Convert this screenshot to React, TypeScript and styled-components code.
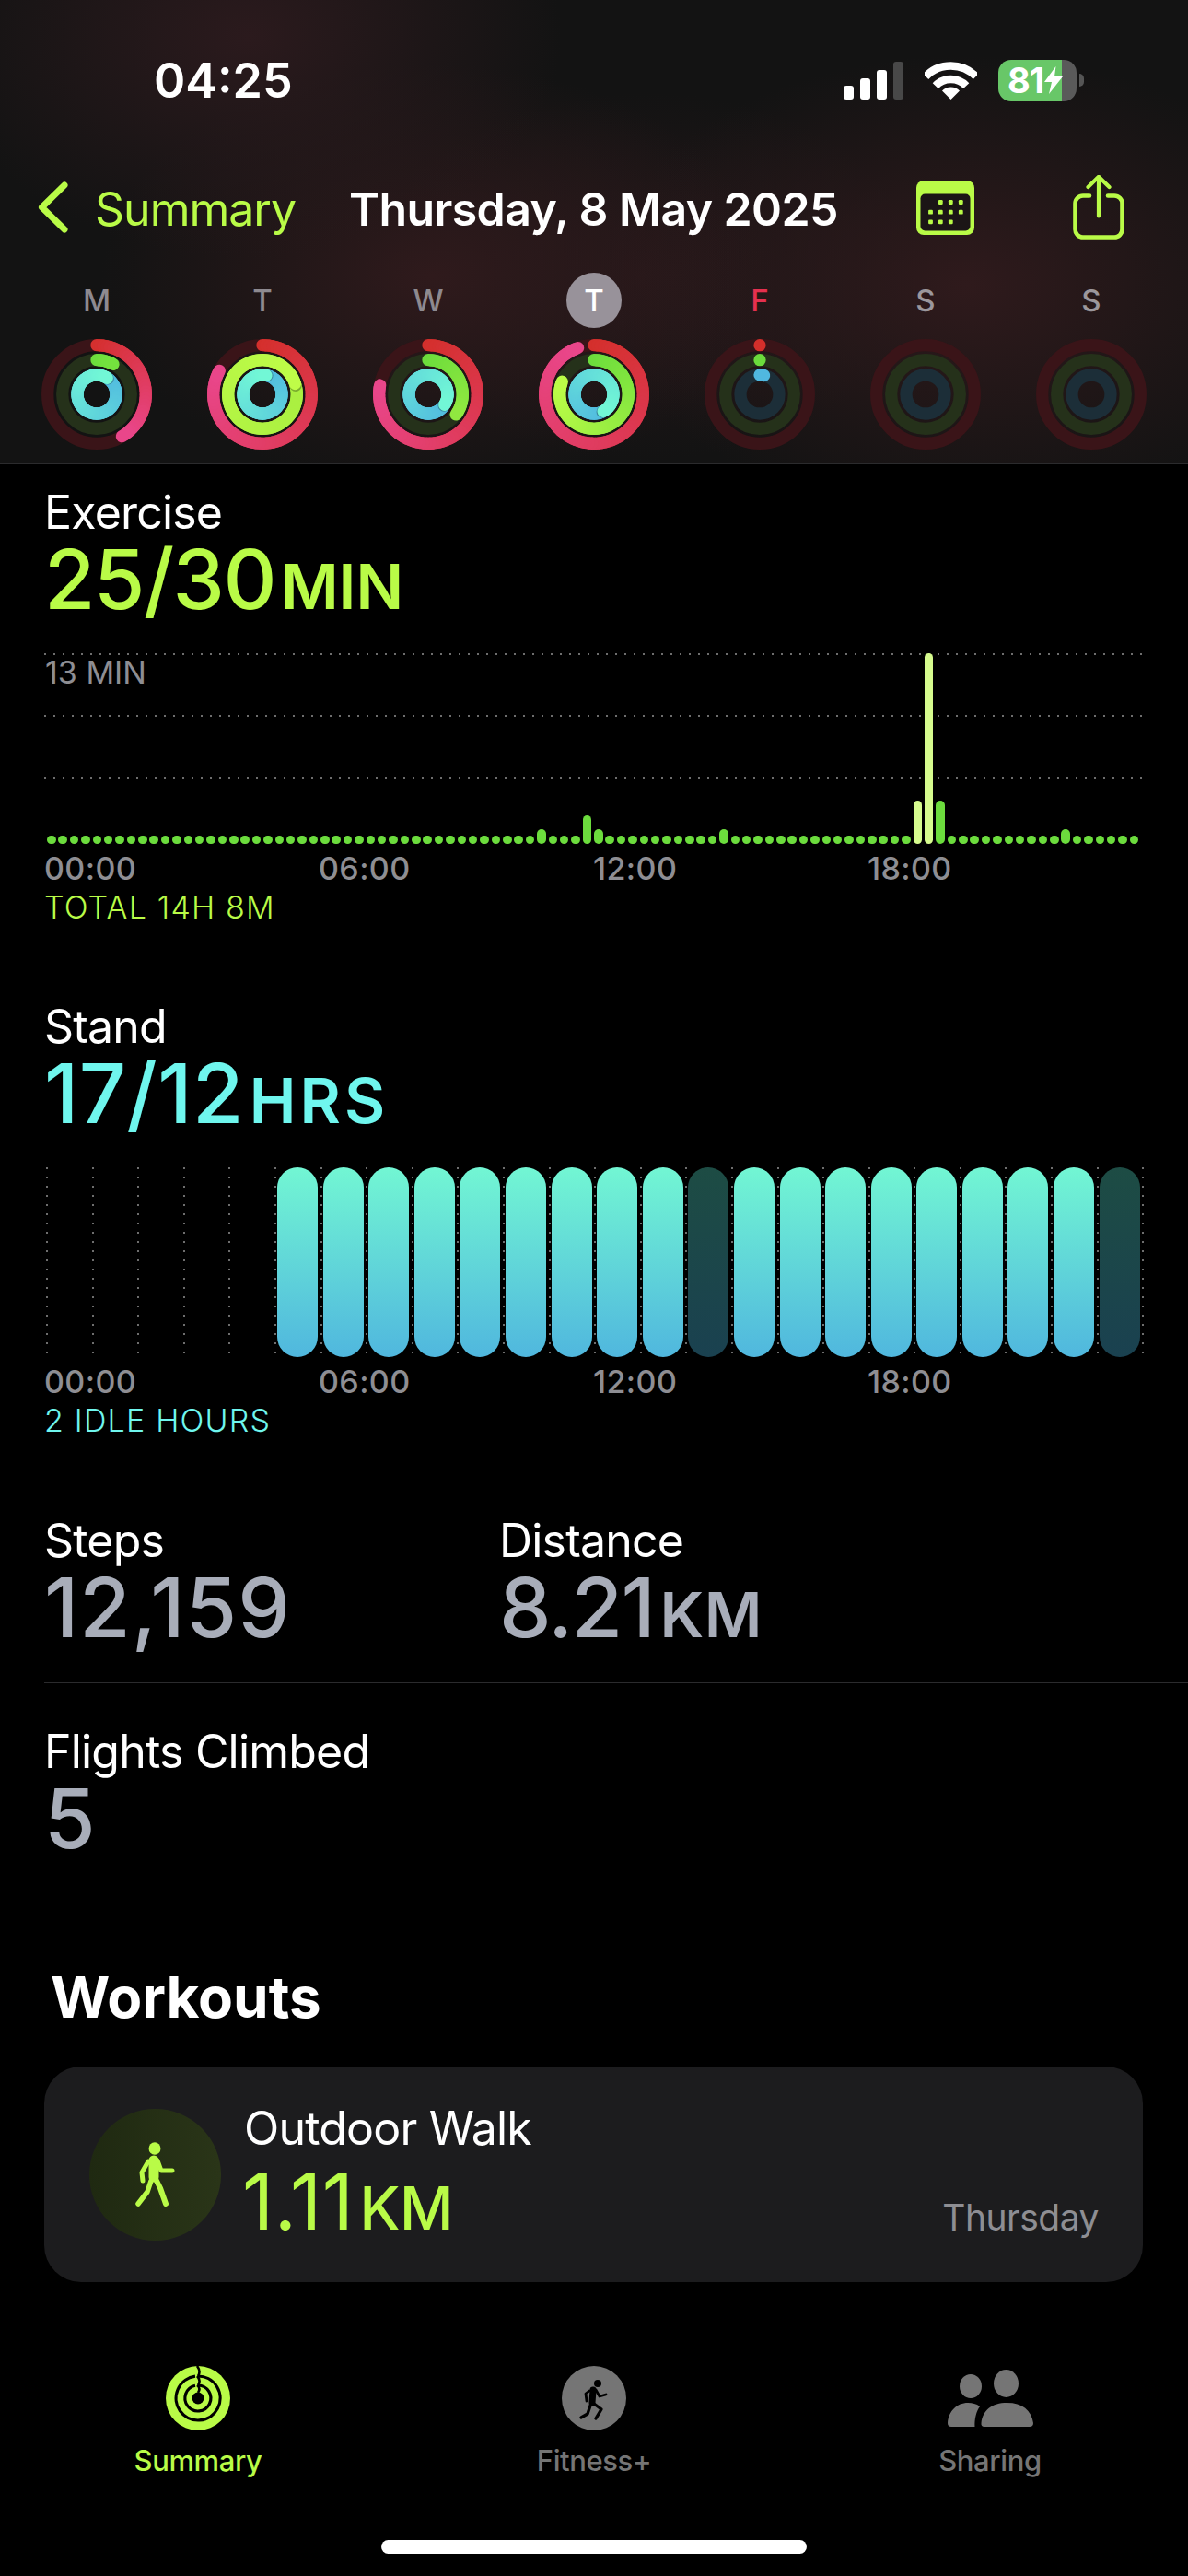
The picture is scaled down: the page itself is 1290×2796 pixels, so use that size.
import React, { FunctionComponent } from 'react';
import styled, { createGlobalStyle } from 'styled-components';

const colors = {
  accent: '#b9fb47',
  cyan: '#6ff6ee',
  grey: '#8e8e93',
  stat: '#a8adb9',
  tab: '#757575',
};

const GlobalStyle = createGlobalStyle`
  html, body {
    margin: 0;
    padding: 0;
    background: #000;
    font-family: Inter, "Noto Sans", "Liberation Sans", sans-serif;
  }
`;

type Arc = { frac: number; from?: string; to?: string };
type Day = { label: string; tone: 'past' | 'today' | 'now' | 'future'; red: Arc; green: Arc; blue: Arc };

const RED = ['#d42f2b', '#e9468a'];
const GREEN = ['#6bdc3c', '#bcfc47'];
const BLUE = ['#50b8e0', '#72f7d6'];

const days: Day[] = [
  {
    label: 'M',
    tone: 'past',
    red: { frac: 0.414 },
    green: { frac: 0.08, from: '#6bdc3c', to: '#74e23e' },
    blue: { frac: 1.09 },
  },
  {
    label: 'T',
    tone: 'past',
    red: { frac: 0.83 },
    green: { frac: 1.2, from: '#a8ee40', to: '#bffc48' },
    blue: { frac: 1.03 },
  },
  {
    label: 'W',
    tone: 'past',
    red: { frac: 0.78 },
    green: { frac: 0.35, from: '#6bdc3c', to: '#90e840' },
    blue: { frac: 1.34 },
  },
  {
    label: 'T',
    tone: 'today',
    red: { frac: 0.947 },
    green: { frac: 0.81 },
    blue: { frac: 1.42 },
  },
  {
    label: 'F',
    tone: 'now',
    red: { frac: 0 },
    green: { frac: 0 },
    blue: { frac: 0.035, from: '#50b8e0', to: '#50b8e0' },
  },
  { label: 'S', tone: 'future', red: { frac: -1 }, green: { frac: -1 }, blue: { frac: -1 } },
  { label: 'S', tone: 'future', red: { frac: -1 }, green: { frac: -1 }, blue: { frac: -1 } },
];

const mix = (a: string, b: string, t: number) => {
  const ch = (hex: string, i: number) => parseInt(hex.slice(1 + i * 2, 3 + i * 2), 16);
  const out = [0, 1, 2].map((i) => Math.round(ch(a, i) + (ch(b, i) - ch(a, i)) * t));
  return `rgb(${out.join(',')})`;
};

const point = (r: number, deg: number) => {
  const rad = (deg * Math.PI) / 180;
  return [60 + r * Math.sin(rad), 60 - r * Math.cos(rad)];
};

const RingArc: FunctionComponent<{ r: number; arc: Arc; base: string[]; track: string }> = ({
  r,
  arc,
  base,
  track,
}) => {
  const w = 13.3;
  const from = arc.from || base[0];
  const to = arc.to || base[1];
  const end = arc.frac * 360;
  const start = arc.frac > 1 ? end - 360 : 0;
  const steps = Math.max(2, Math.ceil((end - start) / 4));
  const parts = [];
  if (arc.frac === 0) {
    const [x, y] = point(r, 0);
    parts.push(<circle key="dot" cx={x} cy={y} r={w / 2} fill={from} />);
  } else if (arc.frac > 0) {
    for (let i = 0; i < steps; i++) {
      const a = start + ((end - start) * i) / steps;
      const b = start + ((end - start) * (i + 1)) / steps;
      const [x1, y1] = point(r, a);
      const [x2, y2] = point(r, b);
      if (arc.frac > 1 && i === steps - 2) {
        const [sx, sy] = point(r, end + 3);
        parts.push(<circle key="shade" cx={sx} cy={sy} r={w / 2} fill="#000" opacity={0.28} />);
      }
      parts.push(
        <path
          key={i}
          d={`M${x1} ${y1} L${x2} ${y2}`}
          stroke={mix(from, to, (i + 1) / steps)}
          strokeWidth={w}
          strokeLinecap="round"
          fill="none"
        />
      );
    }
  }
  return (
    <g>
      <circle cx={60} cy={60} r={r} stroke={track} strokeWidth={w} fill="none" />
      {parts}
    </g>
  );
};

const Rings: FunctionComponent<{ day: Day }> = ({ day }) => (
  <svg width={120} height={120} viewBox="0 0 120 120">
    <RingArc r={53.3} arc={day.red} base={RED} track="#3a1418" />
    <RingArc r={37.3} arc={day.green} base={GREEN} track="#25311a" />
    <RingArc r={21} arc={day.blue} base={BLUE} track="#1c2e38" />
  </svg>
);

const tallBars: Record<number, { h: number; light?: boolean }> = {
  43: { h: 16 },
  47: { h: 31 },
  48: { h: 16 },
  59: { h: 16 },
  76: { h: 47, light: true },
  77: { h: 207, light: true },
  78: { h: 47 },
  89: { h: 16 },
};
const quarterHours = Array.from({ length: 96 }, (_, i) => tallBars[i] || { h: 9.5 });

const idleHours = [14, 23];
const hours = Array.from({ length: 24 }, (_, i) => i);
const axisLabels = ['00:00', '06:00', '12:00', '18:00'];

const App: FunctionComponent = () => (
  <Page>
    <GlobalStyle />
    <Header>
      <StatusBar>
        <Time>04:25</Time>
        <StatusIcons>
          <Signal>
            <SignalBar $h={15} />
            <SignalBar $h={23} />
            <SignalBar $h={32} />
            <SignalBar $h={41} $off />
          </Signal>
          <svg width={57} height={42} viewBox="0 0 57 42">
            <path d="M1.2 17 A38 38 0 0 1 55.8 17" stroke="#fff" strokeWidth={8.5} fill="none" />
            <path d="M11.8 27.2 A23 23 0 0 1 45.2 27.2" stroke="#fff" strokeWidth={8.5} fill="none" />
            <path d="M28.5 42 L19 32.5 A13.5 13.5 0 0 1 38 32.5 Z" fill="#fff" />
          </svg>
          <BatteryWrap>
            <Battery>
              81
              <svg width={20} height={30} viewBox="0 0 20 30">
                <path d="M12.5 0 L0 17 H8 L5 30 L20 11 H11 Z" fill="#fff" />
              </svg>
            </Battery>
            <BatteryCap />
          </BatteryWrap>
        </StatusIcons>
      </StatusBar>

      <NavRow>
        <Back>
          <svg width={33} height={56} viewBox="0 0 33 56">
            <path
              d="M29 4 L4.5 28 L29 52"
              stroke={colors.accent}
              strokeWidth={7}
              strokeLinecap="round"
              strokeLinejoin="round"
              fill="none"
            />
          </svg>
          <BackLabel>Summary</BackLabel>
        </Back>
        <Title>Thursday, 8 May 2025</Title>
        <svg width={63} height={59} viewBox="0 0 63 59">
          <rect width={63} height={59} rx={8} fill={colors.accent} />
          <rect x={4.5} y={14.5} width={54} height={40} rx={5} fill="#1b1516" />
          {[
            [26.3, 23.5],
            [37.3, 23.5],
            [48.3, 23.5],
            [15.5, 34.2],
            [26.3, 34.2],
            [37.3, 34.2],
            [48.3, 34.2],
            [15.5, 44.8],
            [26.3, 44.8],
            [37.3, 44.8],
          ].map(([x, y]) => (
            <rect key={`${x}-${y}`} x={x - 2.4} y={y - 2.4} width={4.8} height={4.8} rx={1.2} fill={colors.accent} />
          ))}
        </svg>
        <svg width={56} height={70} viewBox="0 0 56 70">
          <path
            d="M18 22.5 H11 a8.5 8.5 0 0 0 -8.5 8.5 V59 a8.5 8.5 0 0 0 8.5 8.5 H45 a8.5 8.5 0 0 0 8.5 -8.5 V31 a8.5 8.5 0 0 0 -8.5 -8.5 H38"
            stroke={colors.accent}
            strokeWidth={4.6}
            strokeLinecap="round"
            fill="none"
          />
          <path
            d="M28 44.5 V2 M16.5 13 L28 1.8 L39.5 13"
            stroke={colors.accent}
            strokeWidth={4.2}
            strokeLinecap="round"
            strokeLinejoin="round"
            fill="none"
          />
        </svg>
      </NavRow>

      <DayRow>
        {days.map((day, i) => (
          <DayCell key={i}>
            <DayLabel $tone={day.tone}>{day.label}</DayLabel>
            <Rings day={day} />
          </DayCell>
        ))}
      </DayRow>
    </Header>

    <Section>
      <MetricLabel>Exercise</MetricLabel>
      <MetricValue $color={colors.accent} $spacing={-1.6}>
        25/30<Unit $spacing={0}>MIN</Unit>
      </MetricValue>
      <ExerciseChart>
        <GridLine $top={0} />
        <GridLine $top={67} />
        <GridLine $top={134} />
        <ScaleLabel>13 MIN</ScaleLabel>
        {quarterHours.map((bar, i) => (
          <MoveBar key={i} $h={bar.h} $light={bar.light} />
        ))}
      </ExerciseChart>
      <Axis>
        {axisLabels.map((t) => (
          <AxisLabel key={t}>{t}</AxisLabel>
        ))}
      </Axis>
      <ChartNote $color={colors.accent}>TOTAL 14H 8M</ChartNote>
    </Section>

    <Section>
      <MetricLabel>Stand</MetricLabel>
      <MetricValue $color={colors.cyan} $spacing={0.4}>
        17/12<Unit $spacing={4}>HRS</Unit>
      </MetricValue>
      <StandChart>
        {hours.map((h) => (
          <HourSlot key={h}>{h >= 5 && <HourBar $idle={idleHours.includes(h)} />}</HourSlot>
        ))}
      </StandChart>
      <Axis>
        {axisLabels.map((t) => (
          <AxisLabel key={t}>{t}</AxisLabel>
        ))}
      </Axis>
      <ChartNote $color={colors.cyan}>2 IDLE HOURS</ChartNote>
    </Section>

    <StatsRow>
      <div>
        <MetricLabel>Steps</MetricLabel>
        <MetricValue $color={colors.stat} $spacing={1}>
          12,159
        </MetricValue>
      </div>
      <div>
        <MetricLabel>Distance</MetricLabel>
        <MetricValue $color={colors.stat} $spacing={-1.6}>
          8.21<Unit $spacing={0.5}>KM</Unit>
        </MetricValue>
      </div>
    </StatsRow>

    <FlightsBlock>
      <MetricLabel>Flights Climbed</MetricLabel>
      <MetricValue $color={colors.stat} $spacing={0}>
        5
      </MetricValue>
    </FlightsBlock>

    <WorkoutsTitle>Workouts</WorkoutsTitle>

    <WorkoutCard>
      <WorkoutIcon>
        <svg width={44} height={70} viewBox="0 0 44 70">
          <ellipse cx={21} cy={7} rx={6.5} ry={6.8} fill={colors.accent} />
          <path d="M20 20 V38" stroke={colors.accent} strokeWidth={11} strokeLinecap="round" />
          <path d="M24 20 L28 31 H40" stroke={colors.accent} strokeWidth={5} strokeLinecap="round" strokeLinejoin="round" fill="none" />
          <path d="M14 21 L7 33 L8 42" stroke={colors.accent} strokeWidth={5} strokeLinecap="round" strokeLinejoin="round" fill="none" />
          <path d="M21 38 L27 50 L33 67" stroke={colors.accent} strokeWidth={6} strokeLinecap="round" strokeLinejoin="round" fill="none" />
          <path d="M17 42 L13 54 L3 67" stroke={colors.accent} strokeWidth={5.5} strokeLinecap="round" strokeLinejoin="round" fill="none" />
        </svg>
      </WorkoutIcon>
      <WorkoutText>
        <MetricLabel>Outdoor Walk</MetricLabel>
        <WorkoutValue>
          1.11<WorkoutUnit>KM</WorkoutUnit>
        </WorkoutValue>
      </WorkoutText>
      <WorkoutDay>Thursday</WorkoutDay>
    </WorkoutCard>

    <TabBar>
      <Tab $active>
        <TabIcon>
          <svg width={70} height={70} viewBox="0 0 70 70">
            <circle cx={35} cy={35} r={35} fill={colors.accent} />
            <path d="M35 11 A24 24 0 1 1 32 11.2" stroke="#000" strokeWidth={3.2} fill="none" />
            <path d="M35 21 A14 14 0 1 1 32 21.3" stroke="#000" strokeWidth={3.2} fill="none" />
            <path d="M34 0 C37 4 37 8 35 11 M34 11 C37 14 37 18 35 21 M34 21 C37 23 37 26 35 29" stroke="#000" strokeWidth={2.6} fill="none" />
            <circle cx={35} cy={35} r={6.5} fill="#000" />
          </svg>
        </TabIcon>
        <TabLabel>Summary</TabLabel>
      </Tab>
      <Tab>
        <TabIcon>
          <svg width={70} height={70} viewBox="0 0 70 70">
            <circle cx={35} cy={35} r={35} fill={colors.tab} />
            <circle cx={39} cy={19} r={4} fill="#000" />
            <path d="M34 26 L33 40" stroke="#000" strokeWidth={7} strokeLinecap="round" />
            <path d="M37 26 L41 33 L48 31" stroke="#000" strokeWidth={2.8} strokeLinecap="round" strokeLinejoin="round" fill="none" />
            <path d="M30 27 L26 30 L27 38" stroke="#000" strokeWidth={2.8} strokeLinecap="round" strokeLinejoin="round" fill="none" />
            <path d="M35 41 L43 47 L37 57" stroke="#000" strokeWidth={3.4} strokeLinecap="round" strokeLinejoin="round" fill="none" />
            <path d="M31 43 L28 52 L21 56" stroke="#000" strokeWidth={3.4} strokeLinecap="round" strokeLinejoin="round" fill="none" />
          </svg>
        </TabIcon>
        <TabLabel>Fitness+</TabLabel>
      </Tab>
      <Tab>
        <TabIcon>
          <svg width={93} height={62} viewBox="0 0 93 62">
            <ellipse cx={63.5} cy={15} rx={13.5} ry={15} fill={colors.tab} />
            <ellipse cx={25} cy={18} rx={12} ry={13} fill={colors.tab} />
            <path d="M40 62 Q36 62 36.5 58 C38 44 48 36 64.5 36 C81 36 91 44 93 58 Q93 62 89 62 Z" fill={colors.tab} />
            <path d="M4 62 Q0 62 0 58 C1 45 10 36 22 36 C27 36 31 37 35 40 C31 45 29 54 29.5 62 Z" fill={colors.tab} />
          </svg>
        </TabIcon>
        <TabLabel>Sharing</TabLabel>
      </Tab>
    </TabBar>
    <HomeIndicator />
  </Page>
);

export default App;

const Page = styled.div`
  width: 1290px;
  height: 2796px;
  overflow: hidden;
  background: #000;
  color: #fff;
`;
const Header = styled.header`
  box-sizing: border-box;
  height: 504px;
  border-bottom: 1px solid #2b2b2d;
  background:
    radial-gradient(ellipse 340px 240px at 270px 40px, #2b1a1d 0%, rgba(43, 26, 29, 0) 100%),
    radial-gradient(ellipse 360px 230px at 470px 300px, #2f1a1c 0%, rgba(47, 26, 28, 0) 100%),
    radial-gradient(ellipse 400px 250px at 1050px 310px, #2f1a1c 0%, rgba(47, 26, 28, 0) 100%),
    radial-gradient(ellipse 300px 200px at 700px 300px, #241719 0%, rgba(36, 23, 25, 0) 100%),
    #131313;
`;
const StatusBar = styled.div`
  display: flex;
  align-items: center;
  justify-content: space-between;
  height: 46px;
  padding: 64px 113px 0 167px;
`;
const Time = styled.div`
  margin-top: 2px;
  font-size: 52px;
  font-weight: 600;
  line-height: 46px;
`;
const StatusIcons = styled.div`
  display: flex;
  align-items: center;
  gap: 23px;
`;
const Signal = styled.div`
  display: flex;
  align-items: flex-end;
  gap: 7px;
  height: 41px;
`;
const SignalBar = styled.div<{ $h: number; $off?: boolean }>`
  width: 11px;
  height: ${(p) => p.$h}px;
  border-radius: 3px;
  background: ${(p) => (p.$off ? '#484848' : '#fff')};
`;
const BatteryWrap = styled.div`
  display: flex;
  align-items: center;
  gap: 3px;
`;
const Battery = styled.div`
  display: flex;
  align-items: center;
  box-sizing: border-box;
  width: 85px;
  height: 45px;
  padding-left: 10px;
  gap: 1px;
  border-radius: 14px;
  background: linear-gradient(90deg, #68c768 0 69px, #5a5a5a 69px);
  color: #fff;
  font-size: 38px;
  font-weight: 700;
  letter-spacing: -1px;
`;
const BatteryCap = styled.div`
  width: 5px;
  height: 14px;
  border-radius: 0 5px 5px 0;
  background: #555;
`;
const NavRow = styled.div`
  display: grid;
  grid-template-columns: 338px 616px 170px 56px;
  align-items: center;
  height: 70px;
  margin-top: 80px;
  padding-left: 41px;
`;
const Back = styled.div`
  display: flex;
  align-items: center;
  gap: 29px;
`;
const BackLabel = styled.span`
  margin-top: 3px;
  color: ${colors.accent};
  font-size: 50px;
  letter-spacing: -1px;
`;
const Title = styled.div`
  margin-top: 3px;
  font-size: 50px;
  font-weight: 600;
  letter-spacing: -0.6px;
`;
const DayRow = styled.div`
  display: grid;
  grid-template-columns: repeat(7, 180px);
  margin-top: 36px;
  padding-left: 15px;
`;
const DayCell = styled.div`
  display: flex;
  flex-direction: column;
  align-items: center;
  gap: 12px;
`;
const dayColor = { past: '#8e8a90', today: '#fff', now: '#e5304f', future: '#9b979c' };
const DayLabel = styled.div<{ $tone: 'past' | 'today' | 'now' | 'future' }>`
  display: flex;
  align-items: center;
  justify-content: center;
  width: 60px;
  height: 60px;
  border-radius: 50%;
  font-size: 33px;
  font-weight: 500;
  color: ${(p) => dayColor[p.$tone]};
  background: ${(p) => (p.$tone === 'today' ? '#98929a' : 'transparent')};
`;
const Section = styled.section`
  box-sizing: border-box;
  height: 558px;
  padding: 22px 0 0 48px;
`;
const MetricLabel = styled.div`
  font-size: 50px;
  line-height: 60px;
  letter-spacing: -0.8px;
`;
const MetricValue = styled.div<{ $color: string; $spacing: number }>`
  height: 86px;
  color: ${(p) => p.$color};
  font-size: 90px;
  font-weight: 500;
  line-height: 86px;
  letter-spacing: ${(p) => p.$spacing}px;
`;
const Unit = styled.span<{ $spacing: number }>`
  margin-left: 6px;
  font-size: 68px;
  font-weight: 600;
  letter-spacing: ${(p) => p.$spacing}px;
`;
const ExerciseChart = styled.div`
  position: relative;
  display: flex;
  align-items: flex-end;
  justify-content: space-between;
  box-sizing: border-box;
  width: 1192px;
  height: 207px;
  margin-top: 37px;
  padding: 0 3px;
`;
const GridLine = styled.div<{ $top: number }>`
  position: absolute;
  top: ${(p) => p.$top}px;
  left: 0;
  right: 0;
  height: 2px;
  background: repeating-linear-gradient(90deg, #6e6e6e 0 2px, transparent 2px 10px);
`;
const ScaleLabel = styled.div`
  position: absolute;
  top: 1px;
  left: 1px;
  color: ${colors.grey};
  font-size: 34px;
  line-height: 40px;
`;
const MoveBar = styled.div<{ $h: number; $light?: boolean }>`
  position: relative;
  width: 9.5px;
  height: ${(p) => p.$h}px;
  border-radius: 5px;
  background: ${(p) => (p.$light ? '#d6fb8e' : '#6cdc3d')};
`;
const Axis = styled.div`
  display: grid;
  grid-template-columns: repeat(4, 298px);
  margin-top: 7px;
`;
const AxisLabel = styled.div`
  color: ${colors.grey};
  font-size: 34px;
  font-weight: 500;
  line-height: 40px;
  letter-spacing: 0.4px;
`;
const ChartNote = styled.div<{ $color: string }>`
  margin-top: 2px;
  color: ${(p) => p.$color};
  font-size: 34px;
  font-weight: 300;
  line-height: 40px;
  letter-spacing: 1.2px;
`;
const dots = 'repeating-linear-gradient(180deg, #6e6e6e 0 2px, transparent 2px 10px)';
const StandChart = styled.div`
  display: flex;
  width: 1192px;
  height: 206px;
  margin: 37px 0 0 2px;
  background: ${dots} right top / 2px 203px no-repeat;
`;
const HourSlot = styled.div`
  flex: 0 0 49.6px;
  box-sizing: border-box;
  padding-left: 3px;
  background: ${dots} left top / 2px 203px no-repeat;
`;
const HourBar = styled.div<{ $idle?: boolean }>`
  width: 44px;
  height: 206px;
  border-radius: 22px;
  background: ${(p) =>
    p.$idle
      ? 'linear-gradient(180deg, #1d4c44, #1a4150)'
      : 'linear-gradient(180deg, #72f6d3, #50b7de)'};
`;
const StatsRow = styled.div`
  display: grid;
  grid-template-columns: 494px 1fr;
  box-sizing: border-box;
  height: 207px;
  margin-left: 48px;
  padding-top: 22px;
  border-bottom: 1px solid #2b2b2d;
`;
const FlightsBlock = styled.div`
  padding: 44px 0 0 48px;
`;
const WorkoutsTitle = styled.h2`
  margin: 114px 0 0 55px;
  font-size: 62px;
  font-weight: 700;
  line-height: 74px;
`;
const WorkoutCard = styled.div`
  display: flex;
  align-items: center;
  box-sizing: border-box;
  width: 1193px;
  height: 234px;
  margin: 38px 0 0 48px;
  padding: 0 48px 0 49px;
  border-radius: 40px;
  background: #1c1c1e;
`;
const WorkoutIcon = styled.div`
  display: flex;
  align-items: center;
  justify-content: center;
  width: 143px;
  height: 143px;
  border-radius: 50%;
  background: linear-gradient(90deg, #1f2911, #2a3518);
`;
const WorkoutText = styled.div`
  align-self: flex-start;
  margin: 37px 0 0 25px;
`;
const WorkoutValue = styled.div`
  height: 100px;
  margin-left: -2px;
  color: ${colors.accent};
  font-size: 84px;
  font-weight: 400;
  line-height: 100px;
  letter-spacing: 0.5px;
`;
const WorkoutUnit = styled.span`
  margin-left: 6px;
  font-size: 64px;
  font-weight: 500;
  letter-spacing: -0.5px;
`;
const WorkoutDay = styled.div`
  align-self: flex-end;
  margin: 0 0 46px auto;
  color: ${colors.grey};
  font-size: 39px;
  line-height: 48px;
  letter-spacing: -0.5px;
`;
const TabBar = styled.nav`
  display: grid;
  grid-template-columns: repeat(3, 430px);
  margin-top: 91px;
`;
const Tab = styled.div<{ $active?: boolean }>`
  display: flex;
  flex-direction: column;
  align-items: center;
  gap: 15px;
  color: ${(p) => (p.$active ? colors.accent : colors.tab)};
`;
const TabIcon = styled.div`
  display: flex;
  align-items: center;
  height: 70px;
`;
const TabLabel = styled.div`
  font-size: 31px;
  font-weight: 500;
  line-height: 36px;
  letter-spacing: -0.4px;
`;
const HomeIndicator = styled.div`
  width: 462px;
  height: 15px;
  margin: 68px auto 0;
  border-radius: 8px;
  background: #fff;
`;
